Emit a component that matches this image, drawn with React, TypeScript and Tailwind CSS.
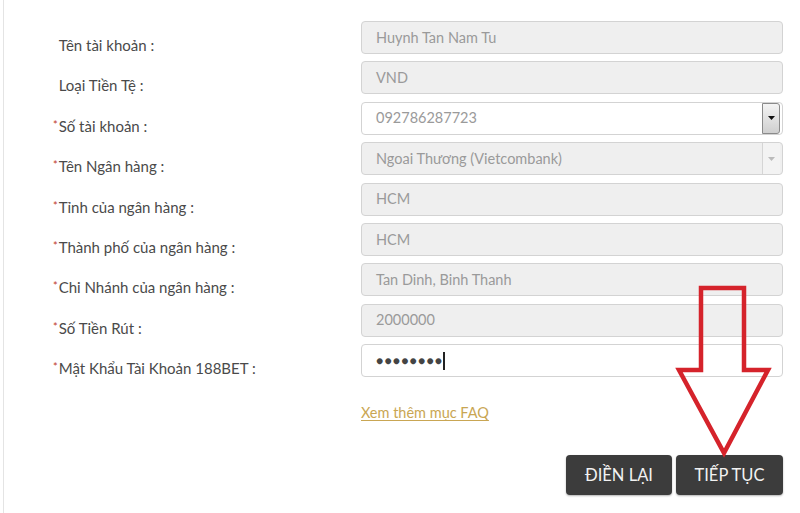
import React from "react";

type Row = {
  label: string;
  required?: boolean;
  value: string;
  editable?: boolean;
  select?: "active" | "disabled";
  password?: boolean;
};

const rows: Row[] = [
  { label: "Tên tài khoản :", value: "Huynh Tan Nam Tu" },
  { label: "Loại Tiền Tệ :", value: "VND" },
  { label: "Số tài khoản :", required: true, value: "092786287723", editable: true, select: "active" },
  { label: "Tên Ngân hàng :", required: true, value: "Ngoai Thương (Vietcombank)", select: "disabled" },
  { label: "Tỉnh của ngân hàng :", required: true, value: "HCM" },
  { label: "Thành phố của ngân hàng :", required: true, value: "HCM" },
  { label: "Chi Nhánh của ngân hàng :", required: true, value: "Tan Dinh, Binh Thanh" },
  { label: "Số Tiền Rút :", required: true, value: "2000000" },
  { label: "Mật Khẩu Tài Khoản 188BET :", required: true, value: "", editable: true, password: true },
];

function SelectArrow({ active }: { active: boolean }) {
  return (
    <div
      className={
        active
          ? "flex h-full w-[18px] items-center justify-center rounded-r-[3px] border-l border-[#8a8a8a] border-y border-r bg-gradient-to-b from-[#f4f4f4] to-[#cfcfcf]"
          : "flex h-full w-[18px] items-center justify-center border-l border-[#d5d5d5] bg-[#f3f3f3]"
      }
    >
      <svg width="7" height="4" viewBox="0 0 7 4">
        <path d="M0 0 L7 0 L3.5 4 Z" fill={active ? "#111" : "#bbb"} />
      </svg>
    </div>
  );
}

function Field({ row }: { row: Row }) {
  const bg = row.editable ? "bg-white" : "bg-[#efefef]";
  return (
    <div
      className={`flex h-[33px] w-[422px] items-center overflow-hidden rounded-[4px] border border-[#d3d3d3] ${bg}`}
    >
      <div className="flex-1 pl-[14px] text-[14.5px] text-[#9a9a9a]">
        {row.password ? (
          <span className="flex items-center text-[#444]">
            <span className="text-[12px] tracking-[1.2px]">●●●●●●●●</span>
            <span className="inline-block h-[18px] w-[1.5px] bg-[#222]" />
          </span>
        ) : (
          row.value
        )}
      </div>
      {row.select && <SelectArrow active={row.select === "active"} />}
      {row.select && <div className="w-[2px]" />}
    </div>
  );
}

export default function App() {
  return (
    <div
      className="relative h-[513px] w-[800px] overflow-hidden bg-white"
      style={{ fontFamily: "Lato, 'Open Sans', sans-serif" }}
    >
      <div className="flex h-full">
        <div className="ml-[3px] w-px bg-[#e4e4e4]" />
        <div className="flex flex-col pt-[21px]">
          <div className="flex flex-col gap-[7.4px]">
            {rows.map((row) => (
              <div key={row.label} className="flex h-[33px]">
                <div className="flex h-[20px] w-[357px] translate-y-[14px] items-start pl-[49px] text-[15px] leading-[20px] text-[#4a4a4a]">
                  <span
                    className={`mr-[1px] -mt-[1px] text-[11px] ${row.required ? "text-[#c0392b]" : "text-transparent"}`}
                  >
                    *
                  </span>
                  <span>{row.label}</span>
                </div>
                <Field row={row} />
              </div>
            ))}
          </div>
          <div className="ml-[357px] mt-[23px]">
            <a href="#" className="text-[14.5px] text-[#c9a653] underline underline-offset-2">
              Xem thêm mục FAQ
            </a>
          </div>
          <div className="mt-[31px] flex justify-end gap-[4px]">
            <button className="h-[40px] w-[106px] rounded-[4px] bg-[#3c3c3c] text-[16.5px] text-[#f2f2f2] shadow-[0_1px_2px_rgba(0,0,0,0.3)]">
              ĐIỀN LẠI
            </button>
            <button className="h-[40px] w-[107px] rounded-[4px] bg-[#3c3c3c] text-[16.5px] text-[#f2f2f2] shadow-[0_1px_2px_rgba(0,0,0,0.3)]">
              TIẾP TỤC
            </button>
          </div>
        </div>
      </div>

      {/* red arrow overlay */}
      <svg
        className="pointer-events-none absolute left-[670px] top-[280px]"
        width="110"
        height="180"
        viewBox="0 0 110 180"
      >
        <path
          d="M31 8 L74 8 L74 90 L98 90 L54 173 L9 90 L31 90 Z"
          fill="none"
          stroke="#d5232b"
          strokeWidth="4.5"
          strokeLinejoin="miter"
        />
      </svg>
    </div>
  );
}
